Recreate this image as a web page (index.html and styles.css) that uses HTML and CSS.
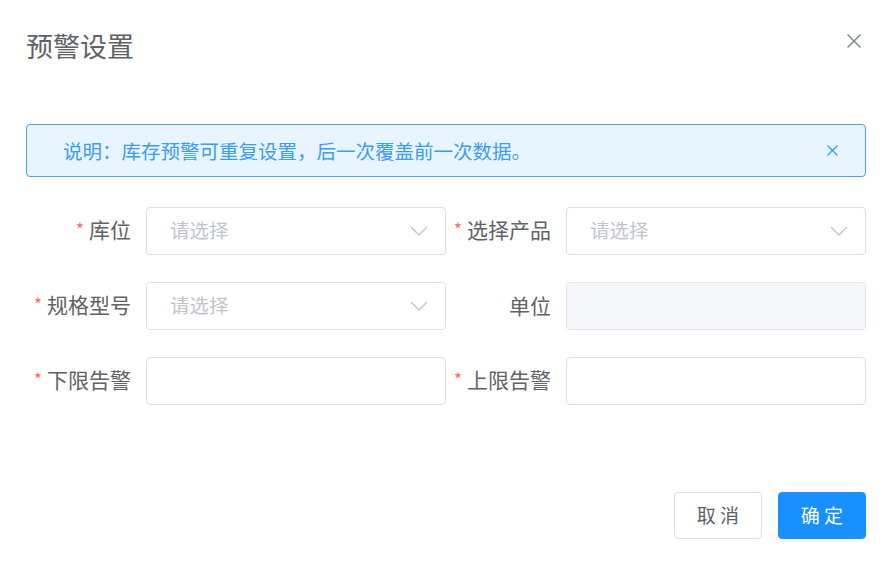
FILE: index.html
```html
<!DOCTYPE html>
<html lang="zh-CN">
<head>
<meta charset="utf-8">
<title>预警设置</title>
<link rel="stylesheet" href="styles.css">
</head>
<body>
<div class="dialog">
  <div class="header">
    <span class="title">预警设置</span>
    <span class="close">
      <svg width="16" height="16" viewBox="0 0 16 16"><path d="M1.5 1.5 L14.5 14.5 M14.5 1.5 L1.5 14.5" stroke="#7a7d85" stroke-width="1.4" fill="none"/></svg>
    </span>
  </div>
  <div class="alert">
    <span class="alert-text">说明：库存预警可重复设置，后一次覆盖前一次数据。</span>
    <span class="alert-close">
      <svg width="13" height="13" viewBox="0 0 13 13"><path d="M1.5 1.5 L11.5 11.5 M11.5 1.5 L1.5 11.5" stroke="#3d9cf2" stroke-width="1.4" fill="none"/></svg>
    </span>
  </div>
  <div class="form">
    <div class="item">
      <label class="label"><span class="req">*</span>库位</label>
      <div class="input select"><span class="ph">请选择</span>
        <svg class="chev" width="18" height="10" viewBox="0 0 18 10"><path d="M1 1 L9 9 L17 1" stroke="#c0c4cc" stroke-width="1.4" fill="none"/></svg>
      </div>
    </div>
    <div class="item">
      <label class="label"><span class="req">*</span>选择产品</label>
      <div class="input select"><span class="ph">请选择</span>
        <svg class="chev" width="18" height="10" viewBox="0 0 18 10"><path d="M1 1 L9 9 L17 1" stroke="#c0c4cc" stroke-width="1.4" fill="none"/></svg>
      </div>
    </div>
    <div class="item">
      <label class="label"><span class="req">*</span>规格型号</label>
      <div class="input select"><span class="ph">请选择</span>
        <svg class="chev" width="18" height="10" viewBox="0 0 18 10"><path d="M1 1 L9 9 L17 1" stroke="#c0c4cc" stroke-width="1.4" fill="none"/></svg>
      </div>
    </div>
    <div class="item">
      <label class="label">单位</label>
      <div class="input disabled"></div>
    </div>
    <div class="item">
      <label class="label"><span class="req">*</span>下限告警</label>
      <div class="input"></div>
    </div>
    <div class="item">
      <label class="label"><span class="req">*</span>上限告警</label>
      <div class="input"></div>
    </div>
  </div>
  <div class="footer">
    <button class="btn">取 消</button>
    <button class="btn primary">确 定</button>
  </div>
</div>
</body>
</html>
```
FILE: styles.css
```css
html, body {
  margin: 0;
  padding: 0;
  background: #fff;
}
body {
  font-family: "Noto Sans CJK SC", "Noto Sans", sans-serif;
  color: #606266;
}
.dialog {
  width: 889px;
  height: 563px;
  box-sizing: border-box;
  padding: 26px 23px 0 26px;
}
.header {
  display: flex;
  justify-content: space-between;
  align-items: center;
  height: 40px;
}
.title {
  font-size: 27px;
  line-height: 40px;
  color: #606266;
}
.close {
  display: flex;
  margin-right: 4px;
  margin-top: -10px;
}
.alert {
  margin-top: 58px;
  height: 53px;
  box-sizing: border-box;
  border: 1px solid #49a2f4;
  background: #e8f4ff;
  border-radius: 4px;
  display: flex;
  align-items: center;
  justify-content: space-between;
  padding: 0 26px 0 36px;
}
.alert-text {
  font-size: 19.5px;
  color: #3d9cf2;
}
.alert-close {
  display: flex;
}
.form {
  margin-top: 30px;
  display: grid;
  grid-template-columns: 420px 420px;
  row-gap: 27px;
}
.item {
  display: flex;
  align-items: center;
}
.label {
  width: 120px;
  box-sizing: border-box;
  padding-right: 15px;
  text-align: right;
  font-size: 21px;
  line-height: 28px;
  margin-top: -3px;
  color: #606266;
}
.req {
  color: #f56c6c;
  font-size: 17px;
  margin-right: 5px;
  position: relative;
  top: -2px;
}
.input {
  width: 300px;
  height: 48px;
  box-sizing: border-box;
  border: 1px solid #dcdfe6;
  border-radius: 4px;
  background: #fff;
  display: flex;
  align-items: center;
  justify-content: space-between;
  padding: 0 17px 0 23px;
}
.input.disabled {
  background: #f5f7fa;
  border-color: #e4e7ed;
}
.ph {
  font-size: 19.5px;
  line-height: 24px;
  margin-top: -2px;
  color: #c0c4cc;
}
.chev {
  display: block;
}
.footer {
  margin-top: 87px;
  display: flex;
  justify-content: flex-end;
  gap: 16px;
}
.btn {
  width: 88px;
  height: 47px;
  box-sizing: border-box;
  border: 1px solid #dcdfe6;
  border-radius: 4px;
  background: #fff;
  color: #606266;
  font-family: "Noto Sans CJK SC", "Noto Sans", sans-serif;
  font-size: 19px;
  padding: 0 0 3px 0;
  cursor: pointer;
}
.btn.primary {
  background: #1890ff;
  border-color: #1890ff;
  color: #fff;
}
```
